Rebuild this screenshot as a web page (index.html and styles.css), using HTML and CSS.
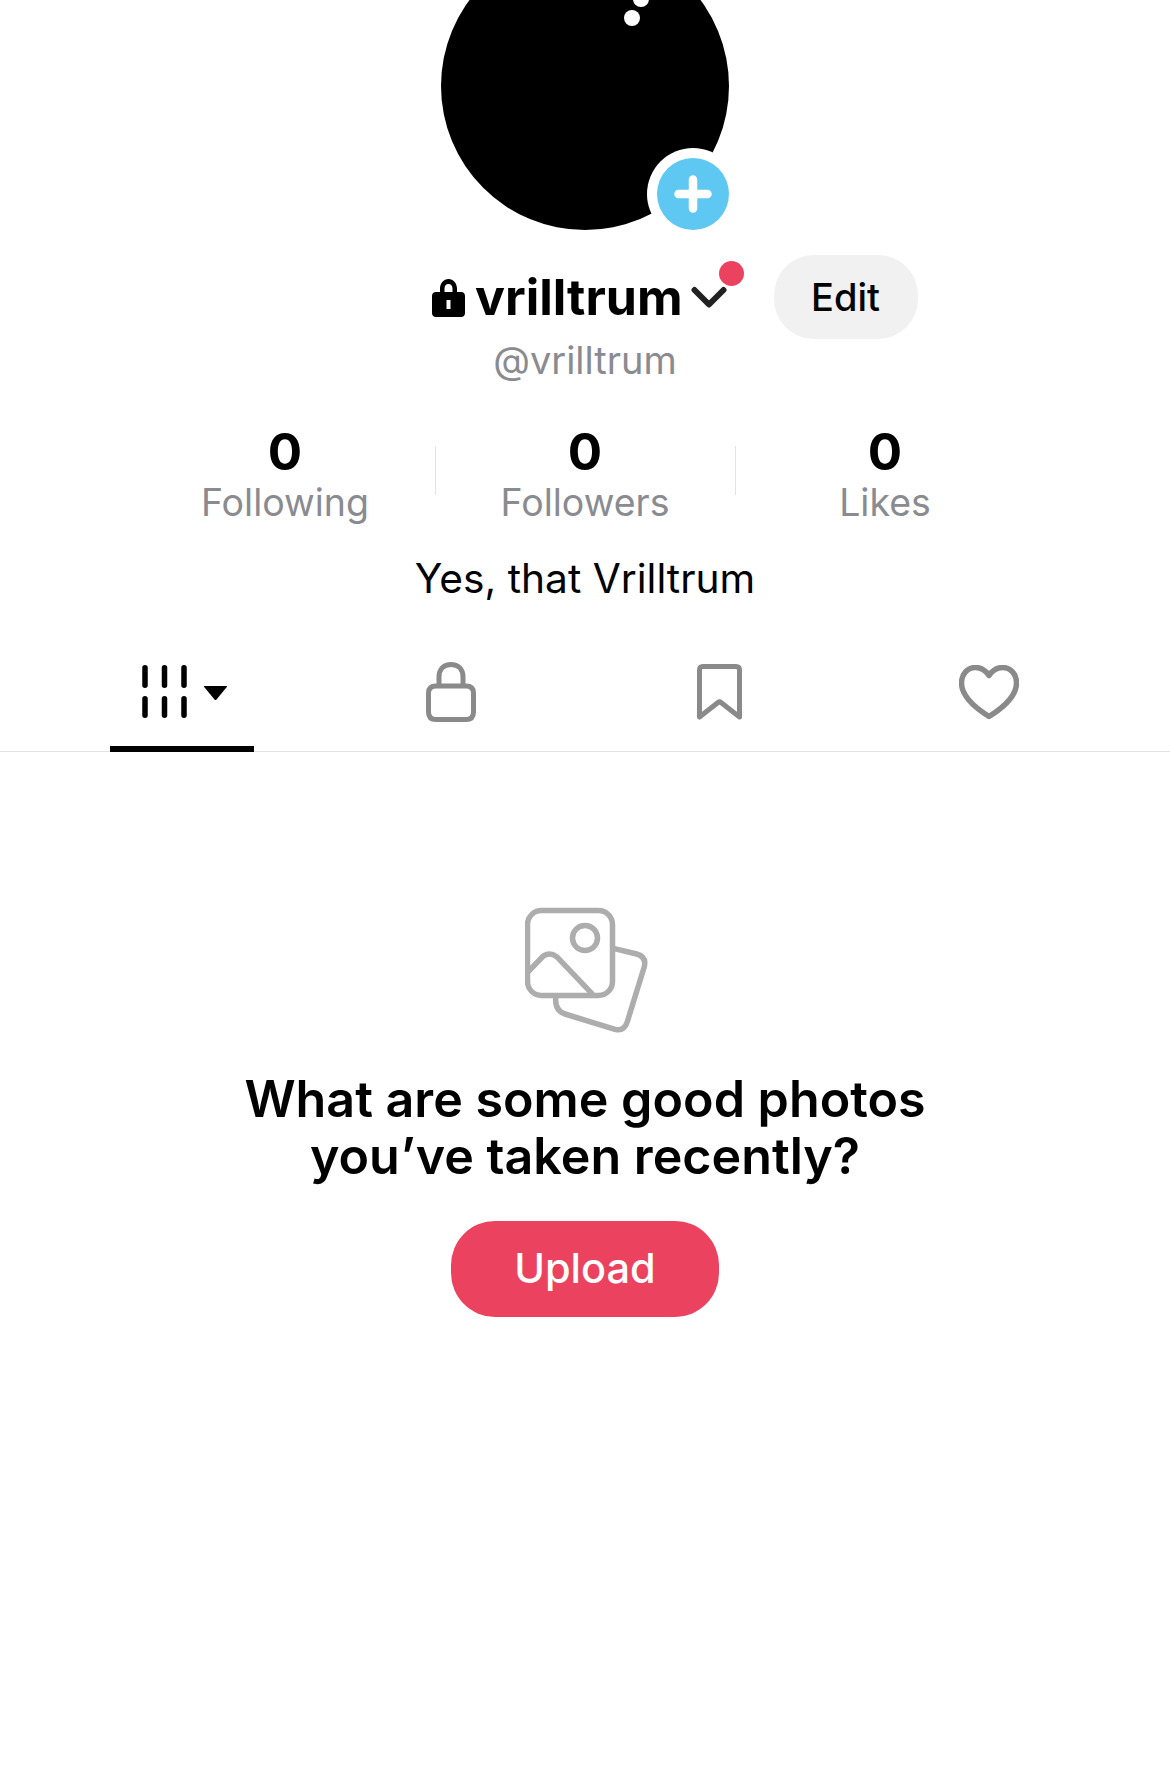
FILE: index.html
```html
<!DOCTYPE html>
<html lang="en">
  <head>
    <meta charset="UTF-8">
    <title>vrilltrum</title>
    <link rel="stylesheet" href="styles.css">
  </head>
  <body>
    <div class="avatar-wrap">
        <div class="avatar">
            <span class="avatar-dot"></span>
            <span class="avatar-dot avatar-dot-top"></span>
        </div>
        <div class="avatar-add">
            <svg width="50" height="50" viewBox="0 0 50 50"><path d="M25 10.500V39.500M10.500 25H39.500" stroke="#fff" stroke-width="8.500" stroke-linecap="round" fill="none"/></svg>
        </div>
    </div>

    <div class="name-row">
        <svg class="name-lock" width="33" height="38" viewBox="0 0 33 38">
            <path fill-rule="evenodd" d="M8 13V9.500C8 4.500 11.500 0 16.500 0S25 4.500 25 9.500V13H29C31.500 13 33 14.500 33 17V34C33 36.500 31.500 38 29 38H4C1.500 38 0 36.500 0 34V17C0 14.500 1.500 13 4 13ZM12.500 13H20.500V9.500C20.500 7 19 5 16.500 5S12.500 7 12.500 9.500ZM14.500 21V30H18.500V21Z"/>
        </svg>
        <span class="name">vrilltrum</span>
        <span class="name-switch">
            <svg width="36" height="24" viewBox="0 0 36 24"><path d="M3.500 4L18 18.500L32.500 4" stroke="#222" stroke-width="6" stroke-linecap="round" stroke-linejoin="round" fill="none"/></svg>
            <span class="red-dot"></span>
        </span>
        <a class="edit-btn">Edit</a>
    </div>
    <div class="handle">@vrilltrum</div>

    <div class="stats">
        <div class="stat">
            <div class="stat-num">0</div>
            <div class="stat-label">Following</div>
        </div>
        <div class="stat-sep"></div>
        <div class="stat">
            <div class="stat-num">0</div>
            <div class="stat-label">Followers</div>
        </div>
        <div class="stat-sep"></div>
        <div class="stat">
            <div class="stat-num">0</div>
            <div class="stat-label">Likes</div>
        </div>
    </div>

    <p class="bio">Yes, that Vrilltrum</p>

    <div class="tabs">
        <div class="tab tab-active">
            <svg width="86" height="56" viewBox="0 0 86 56">
                <path d="M3 3.800V21.200M22.500 3.800V21.200M42 3.800V21.200M3 34.800V51.200M22.500 34.800V51.200M42 34.800V51.200" stroke="#000" stroke-width="5.500" stroke-linecap="round" fill="none"/>
                <path d="M62.500 22H84.500Q85.500 22 84.800 23L74.500 35.500Q73.500 36.500 72.500 35.500L62.200 23Q61.500 22 62.500 22Z" fill="#000"/>
            </svg>
        </div>
        <div class="tab">
            <svg class="tab-lock" width="50" height="60" viewBox="0 0 50 60">
                <path d="M13 24V15C13 7 18 2.500 25 2.500S37 7 37 15V24M10 24H40C45 24 47.500 26.500 47.500 31V50C47.500 55 45 57.500 40 57.500H10C5 57.500 2.500 55 2.500 50V31C2.500 26.500 5 24 10 24Z" stroke="#8a8a8a" stroke-width="5" fill="none"/>
            </svg>
        </div>
        <div class="tab">
            <svg width="45" height="56" viewBox="0 0 45 56">
                <path d="M2.500 6C2.500 3.500 3.500 2.500 6 2.500H39C41.500 2.500 42.500 3.500 42.500 6V53L24 38.500C23 37.700 22 37.700 21 38.500L2.500 53Z" stroke="#8a8a8a" stroke-width="5" stroke-linejoin="round" fill="none"/>
            </svg>
        </div>
        <div class="tab">
            <svg class="tab-heart" width="60" height="55" viewBox="0 0 60 55">
                <path d="M30 10.500C26 4.500 21.500 2.500 16.500 2.500C8.500 2.500 2.500 9 2.500 18C2.500 32 18 44 30 51.500C42 44 57.500 32 57.500 18C57.500 9 51.500 2.500 43.500 2.500C38.500 2.500 34 4.500 30 10.500Z" stroke="#8a8a8a" stroke-width="5.500" stroke-linejoin="round" fill="none"/>
            </svg>
        </div>
    </div>

    <div class="empty">
        <svg class="empty-icon" width="124" height="126" viewBox="0 0 124 126">
            <g stroke="#adadad" stroke-width="5.500" fill="none" stroke-linecap="round" stroke-linejoin="round">
                <rect x="2.500" y="3.500" width="85" height="85" rx="14"/>
                <circle cx="60" cy="31" r="12.500"/>
                <path d="M3.300 64.700L18.300 49Q25 44.700 31.700 49.700L66.700 86.300"/>
                <path d="M88.300 41.300L111.700 47Q121.700 49.700 119.300 59.700L102.300 114.700Q99 124.700 90 122.300L40 107Q30 103.700 30.700 91.300"/>
            </g>
        </svg>
        <h2 class="empty-title">What are some good photos<br>you’ve taken recently?</h2>
        <a class="upload-btn">Upload</a>
    </div>
  </body>
</html>
```

FILE: styles.css
```css
:root {
    --text-primary: #000;
    --text-secondary: #8a8b91;
    --border-color: #e3e3e4;
    --brand-red: #eb435f;
    --brand-blue: #5fc8f2;
}

body {
    font-family: 'Inter', sans-serif;
    margin: 0;
    padding: 0;
    background-color: #fff;
    color: var(--text-primary);
    overflow: hidden;
}

.avatar-wrap {
    position: relative;
    width: 288px;
    height: 288px;
    margin: -58px auto 0;
}

.avatar {
    width: 100%;
    height: 100%;
    border-radius: 50%;
    background: #000;
    position: relative;
    overflow: hidden;
}

.avatar-dot {
    position: absolute;
    left: 183px;
    top: 68px;
    width: 16px;
    height: 16px;
    border-radius: 50%;
    background: #fff;
}

.avatar-dot-top {
    left: 192px;
    top: 49px;
}

.avatar-add {
    position: absolute;
    right: 0;
    bottom: 0;
    width: 72px;
    height: 72px;
    border-radius: 50%;
    background: var(--brand-blue);
    box-shadow: 0 0 0 10px #fff;
    display: flex;
    align-items: center;
    justify-content: center;
}

.name-row {
    display: flex;
    align-items: center;
    height: 84px;
    margin-top: 25px;
    padding-left: 432px;
}

.name-lock {
    margin-right: 10px;
    margin-top: 1px;
}

.name {
    font-size: 50px;
    font-weight: 700;
    line-height: 1;
}

.name-switch {
    position: relative;
    display: flex;
    margin-left: 8px;
    margin-top: 2px;
}

.red-dot {
    position: absolute;
    left: 28px;
    top: -25px;
    width: 25px;
    height: 25px;
    border-radius: 50%;
    background: var(--brand-red);
}

.edit-btn {
    display: flex;
    align-items: center;
    justify-content: center;
    width: 144px;
    height: 84px;
    margin-left: 47px;
    border-radius: 40px;
    background: #f1f1f2;
    font-size: 38px;
    font-weight: 500;
}

.handle {
    margin-top: -1px;
    text-align: center;
    font-size: 38px;
    line-height: 44px;
    color: var(--text-secondary);
}

.stats {
    display: flex;
    justify-content: center;
    align-items: center;
    margin-top: 45px;
}

.stat {
    width: 299px;
    text-align: center;
}

.stat-num {
    margin-bottom: 1px;
    font-size: 51px;
    font-weight: 700;
    line-height: 50px;
}

.stat-label {
    font-size: 37.500px;
    line-height: 50px;
    color: var(--text-secondary);
}

.stat-sep {
    width: 1px;
    height: 49px;
    margin-bottom: 14px;
    background: var(--border-color);
}

.bio {
    margin: 29px 0 0;
    text-align: center;
    font-size: 40.700px;
    line-height: 44px;
}

.tabs {
    display: grid;
    grid-template-columns: repeat(4, 269px);
    justify-content: center;
    height: 112px;
    margin-top: 39px;
    border-bottom: 1px solid var(--border-color);
    box-sizing: border-box;
}

.tab {
    display: flex;
    justify-content: center;
    padding-top: 24px;
    position: relative;
}

.tab-active svg {
    margin-left: 6px;
}

.tab-lock {
    margin-top: -2px;
}

.tab-heart {
    margin-top: 1px;
}

.tab-active::after {
    content: '';
    position: absolute;
    left: 63px;
    bottom: -1px;
    width: 144px;
    height: 6px;
    background: #000;
}

.empty {
    display: flex;
    flex-direction: column;
    align-items: center;
    padding-top: 155px;
}

.empty-icon {
    margin-left: 4px;
}

.empty-title {
    margin: 37px 0 0;
    text-align: center;
    font-size: 50.200px;
    font-weight: 600;
    line-height: 57px;
}

.upload-btn {
    display: flex;
    align-items: center;
    justify-content: center;
    width: 268px;
    height: 94px;
    padding-bottom: 2px;
    margin-top: 37px;
    border-radius: 44px;
    background: var(--brand-red);
    color: #fff;
    font-size: 41.500px;
    font-weight: 500;
}
```
